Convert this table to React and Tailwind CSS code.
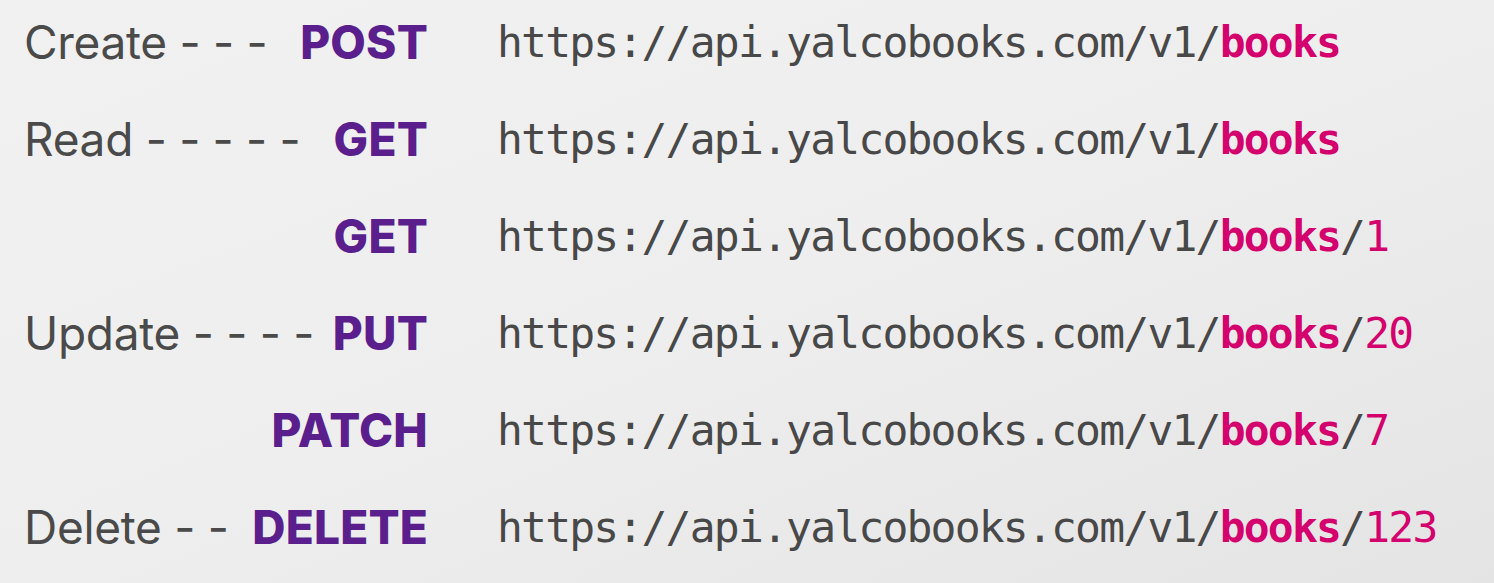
import React from "react";

const rows = [
  { label: "Create - - -", method: "POST", id: "" },
  { label: "Read - - - - -", method: "GET", id: "" },
  { label: "", method: "GET", id: "1" },
  { label: "Update - - - -", method: "PUT", id: "20" },
  { label: "", method: "PATCH", id: "7" },
  { label: "Delete - -", method: "DELETE", id: "123" },
];

const App = () => {
  return (
    <div className="w-[1494px] h-[583px] overflow-hidden bg-gradient-to-br from-[#f1f1f1] via-[#eeeeee] to-[#e4e4e4]">
      <div className="grid grid-cols-[404px_auto] gap-x-[69px] pl-[24px] -mt-[6px]">
        {rows.map((row, i) => (
          <React.Fragment key={i}>
            {/* label + method */}
            <div className="flex items-center justify-between h-[97px] font-['Inter',sans-serif]">
              <span className="text-[46px] text-[#4a4a4a] tracking-[-0.3px]">{row.label}</span>
              <span className="text-[46px] font-extrabold text-[#5a1f8d] tracking-[0.2px]">{row.method}</span>
            </div>

            {/* endpoint */}
            <div className="flex items-center h-[97px] font-['DejaVu_Sans_Mono',monospace] text-[43px] tracking-[-1.8px] text-[#484848] whitespace-pre">
              <span>https://api.yalcobooks.com/v1/</span>
              <span className="font-bold text-[#d3006d]">books</span>
              {row.id && (
                <>
                  <span>/</span>
                  <span className="text-[#d3006d]">{row.id}</span>
                </>
              )}
            </div>
          </React.Fragment>
        ))}
      </div>
    </div>
  );
};

export default App;
